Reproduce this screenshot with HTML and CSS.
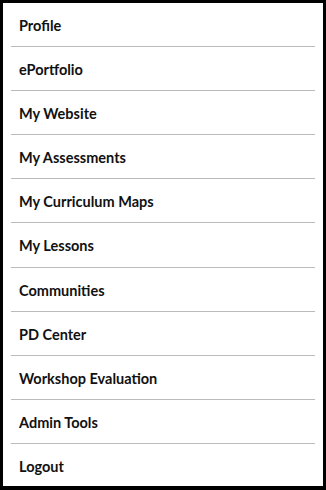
FILE: index.html
```html
<!DOCTYPE html>
<html lang="en">
<head>
  <meta charset="UTF-8">
  <title>Menu</title>
  <link rel="stylesheet" href="styles.css">
</head>
<body>

<nav class="menu">
  <ul class="menu-list">
    <li class="menu-item"><a href="#">Profile</a></li>
    <li class="menu-item"><a href="#">ePortfolio</a></li>
    <li class="menu-item"><a href="#">My Website</a></li>
    <li class="menu-item"><a href="#">My Assessments</a></li>
    <li class="menu-item"><a href="#">My Curriculum Maps</a></li>
    <li class="menu-item"><a href="#">My Lessons</a></li>
    <li class="menu-item"><a href="#">Communities</a></li>
    <li class="menu-item"><a href="#">PD Center</a></li>
    <li class="menu-item"><a href="#">Workshop Evaluation</a></li>
    <li class="menu-item"><a href="#">Admin Tools</a></li>
    <li class="menu-item"><a href="#">Logout</a></li>
  </ul>
</nav>

</body>
</html>
```

FILE: styles.css
```css
* {
  box-sizing: border-box;
}

body {
  margin: 0;
  background-color: #fff;
  font-family: Lato, "Liberation Sans", sans-serif;
}

.menu {
  width: 326px;
  height: 490px;
  border: 3px solid #000;
  border-bottom-width: 4px;
  background-color: #fff;
}

.menu-list {
  list-style: none;
  margin: 0;
  padding: 0 8px;
}

.menu-item {
  border-bottom: 1px solid #bbb;
}

.menu-item:last-child {
  border-bottom: none;
}

.menu-item a {
  display: block;
  height: 43.1px;
  padding: 1px 8px 0;
  line-height: 43px;
  font-size: 14.5px;
  font-weight: bold;
  color: #111;
  text-decoration: none;
}
```
